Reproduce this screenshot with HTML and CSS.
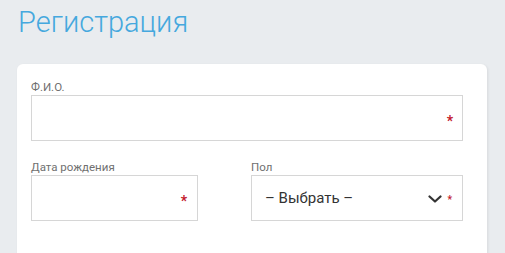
FILE: index.html
```html
<!DOCTYPE html>
<html lang="ru">
<head>
<meta charset="UTF-8">
<title>Регистрация</title>
<link rel="stylesheet" href="styles.css">
</head>
<body>
<h1 class="page-title">Регистрация</h1>
<div class="card">
	<div class="field">
		<label class="field-label">Ф.И.О.</label>
		<div class="input input-wide">
			<span class="req">*</span>
		</div>
	</div>
	<div class="row">
		<div class="field">
			<label class="field-label">Дата рождения</label>
			<div class="input">
				<span class="req">*</span>
			</div>
		</div>
		<div class="field">
			<label class="field-label">Пол</label>
			<div class="input select">
				<span class="select-value">– Выбрать –</span>
				<svg class="chevron" width="14" height="8" viewBox="0 0 14 8">
					<path d="M1.5 1.5 L7 6.5 L12.5 1.5" fill="none" stroke="#333" stroke-width="2.2" stroke-linecap="round" stroke-linejoin="round"/>
				</svg>
				<span class="req req-small">*</span>
			</div>
		</div>
	</div>
</div>
</body>
</html>
```

FILE: styles.css
```css
html, body {
	height: 100%;
}

body {
	margin: 0;
	background-color: #e9ecef;
	font-family: Roboto, "Liberation Sans", Arial, sans-serif;
	overflow: hidden;
}

.page-title {
	margin: 0;
	padding: 4px 0 0 18px;
	height: 64px;
	box-sizing: border-box;
	font-size: 29px;
	font-weight: 300;
	color: #45a8de;
	line-height: 36px;
}

.card {
	margin-left: 17px;
	width: 470px;
	height: calc(100% - 64px);
	background-color: #fff;
	border-radius: 6px 6px 0 0;
	box-shadow: 1px 1px 3px rgba(0, 0, 0, 0.08);
	padding: 16px 0 0 14px;
	box-sizing: border-box;
}

.field-label {
	display: block;
	font-size: 11.5px;
	color: #707070;
	line-height: 14px;
	margin-bottom: 1px;
}

.input {
	width: 167px;
	height: 46px;
	box-sizing: border-box;
	border: 1px solid #d6d6d6;
	display: flex;
	align-items: center;
	justify-content: flex-end;
	padding-right: 10px;
}

.input-wide {
	width: 432px;
	padding-right: 9px;
}

.row {
	display: grid;
	grid-template-columns: 167px 212px;
	column-gap: 53px;
	margin-top: 19px;
}

.select {
	width: 212px;
	justify-content: flex-start;
	padding: 0 10px 0 13px;
}

.select-value {
	flex: 1;
	font-size: 15px;
	color: #333;
}

.chevron {
	margin-right: 5px;
	margin-top: 1px;
}

.req {
	color: #c3172b;
	font-size: 14px;
	font-weight: bold;
	line-height: 1;
	margin-top: 5px;
}

.req-small {
	font-size: 10px;
	margin-top: 3px;
}
```
